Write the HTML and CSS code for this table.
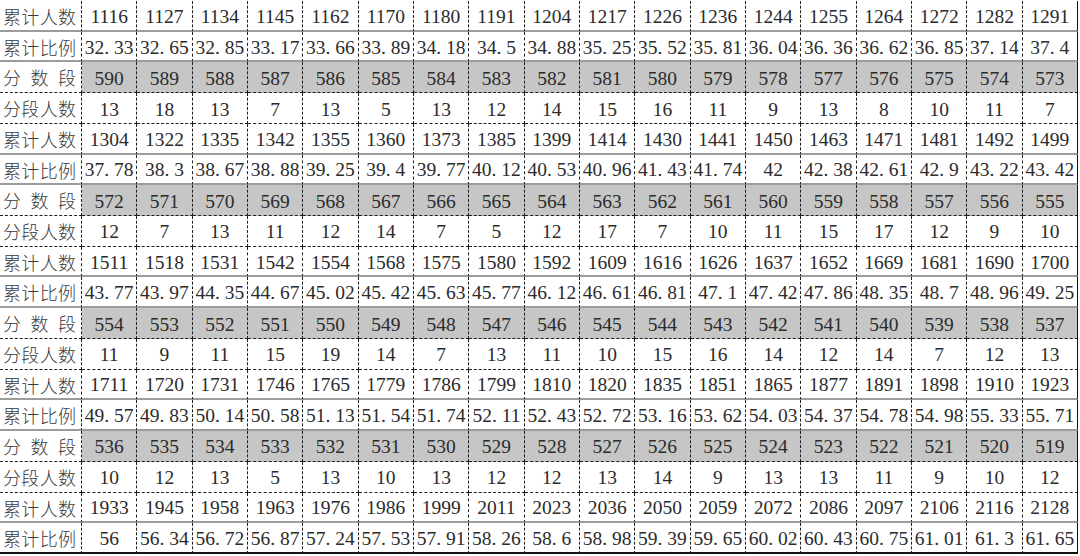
FILE: index.html
```html
<!DOCTYPE html>
<html lang="zh-CN">
<head>
<meta charset="utf-8">
<title>分数段统计表</title>
<link rel="stylesheet" href="styles.css">
</head>
<body>
<div class="sheet" id="sheet"></div>
<script src="script.js"></script>
</body>
</html>
```
FILE: styles.css
```css
body {
  margin: 0;
  background: #fff;
}
.sheet {
  display: grid;
  grid-template-columns: 82px repeat(18, 1fr);
  grid-template-rows: repeat(18, 30.72px);
  width: 1078px;
  padding-top: 1px;
  font-family: "Liberation Serif", "Times New Roman", serif;
  font-size: 19.5px;
  color: #2b2b2b;
}
.cell {
  box-sizing: border-box;
  border-right: 1px dashed #1e1e1e;
  border-bottom: 1px dashed #1e1e1e;
  display: flex;
  align-items: center;
  justify-content: center;
  padding-top: 3px;
  white-space: nowrap;
  overflow: hidden;
}
.row-c,
.row-r {
  border-bottom: 2px solid #9c9c9c;
}
.row-s {
  background: #c6c6c6;
}
.row-s.lab {
  background: #fff;
}
.last-col {
  border-right: 1px solid #111;
}
.last-row {
  border-bottom: 2px solid #111;
}
.lab {
  display: block;
  font-family: "Noto Sans CJK SC", "Noto Sans CJK TC", sans-serif;
  font-weight: 300;
  font-size: 18px;
  color: #3a3a3a;
  text-align: justify;
  text-align-last: justify;
  line-height: 27px;
  padding: 2px 5px 0 3px;
}
.pt {
  display: inline-block;
  width: 0.5em;
}
```
FILE: script.js
```js
var labels = { c: '累计人数', r: '累计比例', s: '分数段', n: '分段人数' };
var cum = [
  [1116,1127,1134,1145,1162,1170,1180,1191,1204,1217,1226,1236,1244,1255,1264,1272,1282,1291],
  [1304,1322,1335,1342,1355,1360,1373,1385,1399,1414,1430,1441,1450,1463,1471,1481,1492,1499],
  [1511,1518,1531,1542,1554,1568,1575,1580,1592,1609,1616,1626,1637,1652,1669,1681,1690,1700],
  [1711,1720,1731,1746,1765,1779,1786,1799,1810,1820,1835,1851,1865,1877,1891,1898,1910,1923],
  [1933,1945,1958,1963,1976,1986,1999,2011,2023,2036,2050,2059,2072,2086,2097,2106,2116,2128]
];
var ratio = [
  ['32.33','32.65','32.85','33.17','33.66','33.89','34.18','34.5','34.88','35.25','35.52','35.81','36.04','36.36','36.62','36.85','37.14','37.4'],
  ['37.78','38.3','38.67','38.88','39.25','39.4','39.77','40.12','40.53','40.96','41.43','41.74','42','42.38','42.61','42.9','43.22','43.42'],
  ['43.77','43.97','44.35','44.67','45.02','45.42','45.63','45.77','46.12','46.61','46.81','47.1','47.42','47.86','48.35','48.7','48.96','49.25'],
  ['49.57','49.83','50.14','50.58','51.13','51.54','51.74','52.11','52.43','52.72','53.16','53.62','54.03','54.37','54.78','54.98','55.33','55.71'],
  ['56','56.34','56.72','56.87','57.24','57.53','57.91','58.26','58.6','58.98','59.39','59.65','60.02','60.43','60.75','61.01','61.3','61.65']
];
var seg = [
  [13,18,13,7,13,5,13,12,14,15,16,11,9,13,8,10,11,7],
  [12,7,13,11,12,14,7,5,12,17,7,10,11,15,17,12,9,10],
  [11,9,11,15,19,14,7,13,11,10,15,16,14,12,14,7,12,13],
  [10,12,13,5,13,10,13,12,12,13,14,9,13,13,11,9,10,12]
];
var starts = [590, 572, 554, 536];

var rows = [['c', cum[0]], ['r', ratio[0]]];
for (var g = 0; g < 4; g++) {
  var s = [];
  for (var k = 0; k < 18; k++) s.push(starts[g] - k);
  rows.push(['s', s], ['n', seg[g]], ['c', cum[g + 1]], ['r', ratio[g + 1]]);
}

var sheet = document.getElementById('sheet');
rows.forEach(function (row, ri) {
  var type = row[0], vals = row[1];
  var last = ri === rows.length - 1 ? ' last-row' : '';
  var lab = document.createElement('div');
  lab.className = 'cell lab row-' + type + last;
  lab.textContent = labels[type];
  sheet.appendChild(lab);
  vals.forEach(function (v, ci) {
    var d = document.createElement('div');
    d.className = 'cell row-' + type + last + (ci === 17 ? ' last-col' : '');
    var str = String(v);
    var i = str.indexOf('.');
    if (i >= 0) {
      d.appendChild(document.createTextNode(str.slice(0, i)));
      var p = document.createElement('span');
      p.className = 'pt';
      p.textContent = '.';
      d.appendChild(p);
      d.appendChild(document.createTextNode(str.slice(i + 1)));
    } else {
      d.textContent = str;
    }
    sheet.appendChild(d);
  });
});
```
